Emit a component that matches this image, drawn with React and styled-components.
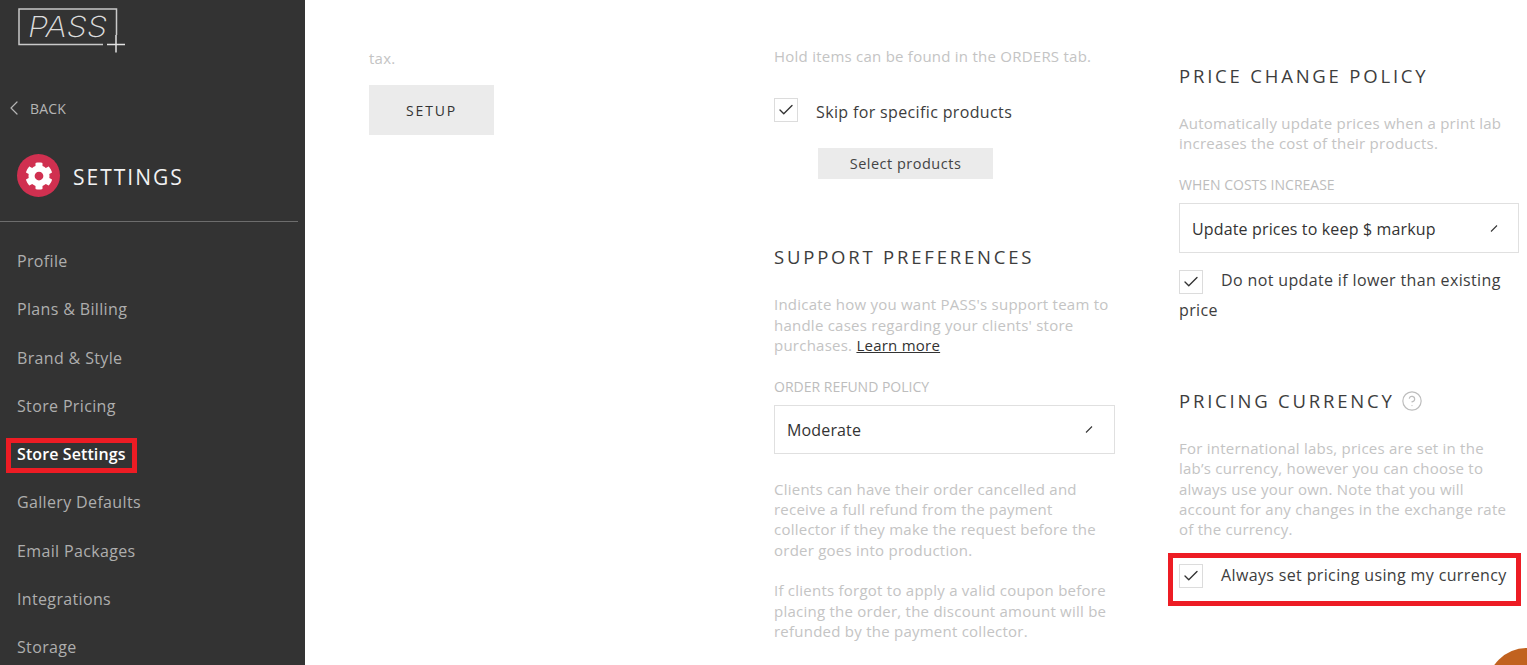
import styled, { createGlobalStyle } from "styled-components";
import { Check, ChevronLeft, CircleHelp } from "lucide-react";
import { FaCog } from "react-icons/fa";

const navItems = [
  "Profile",
  "Plans & Billing",
  "Brand & Style",
  "Store Pricing",
  "Store Settings",
  "Gallery Defaults",
  "Email Packages",
  "Integrations",
  "Storage",
];

function Logo() {
  return (
    <LogoMark width="112" height="46" viewBox="0 0 112 46">
      <path d="M98.5 27V1H1V36.5H85" fill="none" stroke="#c9c9c9" strokeWidth="1.5" />
      <text
        x="10"
        y="29"
        fontFamily="Inter, sans-serif"
        fontSize="29"
        fontStyle="italic"
        fontWeight="200"
        fill="#dcdcdc"
        textLength="79"
        lengthAdjust="spacingAndGlyphs"
      >
        PASS
      </text>
      <path d="M89 36.5H107M98 27V44.5" fill="none" stroke="#e2e2e2" strokeWidth="1.5" />
    </LogoMark>
  );
}

function Checkbox() {
  return (
    <Box>
      <Check size={18} strokeWidth={1.8} color="#333" />
    </Box>
  );
}

function Dropdown({ value, height, arrowGap }) {
  return (
    <Select $height={height} $arrowGap={arrowGap}>
      <span>{value}</span>
      <svg width="10" height="10" viewBox="0 0 10 10">
        <path d="M2 8.5L8 2.5" stroke="#333" strokeWidth="1.1" />
      </svg>
    </Select>
  );
}

export default function App() {
  return (
    <Page>
      <GlobalStyle />
      <Sidebar>
        <Logo />
        <Back>
          <ChevronLeft size={24} strokeWidth={1.2} color="#b5b5b5" />
          BACK
        </Back>
        <SettingsHead>
          <GearBadge>
            <FaCog size={28} color="#fff" />
          </GearBadge>
          <SettingsLabel>SETTINGS</SettingsLabel>
        </SettingsHead>
        <Divider />
        <Nav>
          {navItems.map((item) => (
            <NavItem key={item} $active={item === "Store Settings"}>
              {item}
            </NavItem>
          ))}
        </Nav>
      </Sidebar>

      <Main>
        <ColumnOne>
          <Help>tax.</Help>
          <SetupButton>SETUP</SetupButton>
        </ColumnOne>

        <ColumnTwo>
          <Help>Hold items can be found in the ORDERS tab.</Help>
          <CheckRow>
            <Checkbox />
            <CheckText>Skip for specific products</CheckText>
          </CheckRow>
          <SmallButton>Select products</SmallButton>
          <Heading $top={66}>SUPPORT PREFERENCES</Heading>
          <Help $top={25}>
            Indicate how you want PASS's support team to handle cases regarding your clients' store purchases.{" "}
            <LearnMore>Learn more</LearnMore>
          </Help>
          <Label $top={22}>ORDER REFUND POLICY</Label>
          <Dropdown value="Moderate" height={49} arrowGap={20} />
          <Help $top={25}>
            Clients can have their order cancelled and receive a full refund from the payment collector if they make the
            request before the order goes into production.
          </Help>
          <Help $top={20}>
            If clients forgot to apply a valid coupon before placing the order, the discount amount will be refunded by
            the payment collector.
          </Help>
        </ColumnTwo>

        <ColumnThree>
          <Heading>PRICE CHANGE POLICY</Heading>
          <Help $top={25}>Automatically update prices when a print lab increases the cost of their products.</Help>
          <Label $top={22}>WHEN COSTS INCREASE</Label>
          <Dropdown value="Update prices to keep $ markup" height={50} arrowGap={19} />
          <WrapRow>
            <Checkbox />
            <CheckText>Do not update if lower than existing price</CheckText>
          </WrapRow>
          <Heading $top={64}>
            PRICING CURRENCY
            <CircleHelp size={22} strokeWidth={1.3} color="#bdbdbd" />
          </Heading>
          <Help $top={25}>
            For international labs, prices are set in the lab’s currency, however you can choose to always use your own.
            Note that you will account for any changes in the exchange rate of the currency.
          </Help>
          <MarkedRow>
            <Checkbox />
            <CheckText>Always set pricing using my currency</CheckText>
          </MarkedRow>
        </ColumnThree>
      </Main>
      <ChatBubble />
    </Page>
  );
}

const GlobalStyle = createGlobalStyle`
  html, body {
    margin: 0;
    height: 100%;
    overflow: hidden;
    background: #fff;
  }
  body {
    font-family: "Open Sans", sans-serif;
    color: #333;
  }
`;

const Page = styled.div`
  position: relative;
  display: flex;
  width: 100vw;
  height: 100vh;
  overflow: hidden;
`;

const Sidebar = styled.aside`
  flex: 0 0 305px;
  display: flex;
  flex-direction: column;
  background: #333;
  padding-top: 8px;
  box-sizing: border-box;
  overflow: hidden;

  > * {
    flex-shrink: 0;
  }
`;

const LogoMark = styled.svg`
  display: block;
  margin-left: 18px;
`;

const Back = styled.div`
  display: flex;
  align-items: center;
  gap: 4px;
  margin: 44px 0 0 2px;
  height: 20px;
  font-size: 14px;
  letter-spacing: 0.2px;
  color: #b5b5b5;
`;

const SettingsHead = styled.div`
  display: flex;
  align-items: center;
  gap: 13px;
  margin: 36px 0 0 17px;
  font-size: 21px;
  letter-spacing: 2px;
  color: #f2f2f2;
`;

const SettingsLabel = styled.span`
  padding-top: 2px;
`;

const GearBadge = styled.span`
  display: flex;
  align-items: center;
  justify-content: center;
  width: 43px;
  height: 43px;
  border-radius: 50%;
  background: #d03050;
`;

const Divider = styled.div`
  width: 298px;
  height: 1px;
  margin-top: 24px;
  background: #6d6d6d;
`;

const Nav = styled.nav`
  display: flex;
  flex-direction: column;
  margin-top: 15px;
`;

const NavItem = styled.div`
  position: relative;
  flex: 0 0 48.25px;
  display: flex;
  align-items: center;
  padding-left: 17px;
  font-size: 16px;
  letter-spacing: ${(p) => (p.$active ? 0.1 : 0.35)}px;
  font-weight: ${(p) => (p.$active ? 600 : 400)};
  color: ${(p) => (p.$active ? "#fff" : "#aeaeae")};

  ${(p) =>
    p.$active &&
    `
    &::after {
      content: "";
      position: absolute;
      left: 6px;
      top: 8px;
      width: 131px;
      height: 35px;
      box-sizing: border-box;
      border: 5px solid #ed1c24;
    }
  `}
`;

const Main = styled.main`
  flex: 1;
  display: grid;
  grid-template-columns: 341px 341px 340px;
  column-gap: 64px;
  padding-left: 64px;
`;

const ColumnOne = styled.section`
  padding-top: 48px;
`;

const ColumnTwo = styled.section`
  padding-top: 46px;
`;

const ColumnThree = styled.section`
  padding-top: 64px;
`;

const Help = styled.p`
  margin: ${(p) => p.$top || 0}px 0 0;
  font-size: 15px;
  line-height: 20.4px;
  letter-spacing: 0.24px;
  color: #c4c4c4;
`;

const LearnMore = styled.a`
  color: #333;
  text-decoration: underline;
`;

const Heading = styled.h2`
  display: flex;
  align-items: center;
  gap: 6px;
  margin: ${(p) => p.$top || 0}px 0 0;
  font-size: 18.5px;
  line-height: 24px;
  font-weight: 400;
  letter-spacing: 2.8px;
  color: #3d3d3d;
`;

const Label = styled.div`
  margin-top: ${(p) => p.$top || 0}px;
  font-size: 14px;
  line-height: 18px;
  color: #bdbdbd;
`;

const SetupButton = styled.button`
  display: block;
  width: 125px;
  height: 50px;
  margin-top: 17px;
  border: 0;
  background: #ebebeb;
  font: 14px "Open Sans", sans-serif;
  letter-spacing: 1.8px;
  color: #333;
`;

const SmallButton = styled.button`
  display: block;
  width: 175px;
  height: 31px;
  margin: 22px 0 0 44px;
  border: 0;
  background: #ebebeb;
  font: 14.5px "Open Sans", sans-serif;
  letter-spacing: 0.5px;
  color: #444;
`;

const Select = styled.div`
  display: flex;
  align-items: center;
  justify-content: space-between;
  height: ${(p) => p.$height}px;
  margin-top: 9px;
  padding: 0 ${(p) => p.$arrowGap}px 0 12px;
  border: 1px solid #e0e0e0;
  box-sizing: border-box;
  font-size: 16px;
  letter-spacing: 0.15px;
  color: #333;

  span {
    padding-top: 2px;
  }
`;

const Box = styled.span`
  display: inline-flex;
  align-items: center;
  justify-content: center;
  width: 24px;
  height: 24px;
  border: 1px solid #dcdcdc;
  box-sizing: border-box;
  vertical-align: middle;
`;

const CheckRow = styled.div`
  display: flex;
  align-items: flex-start;
  gap: 18px;
  margin-top: 32px;
  line-height: 28px;
`;

const CheckText = styled.span`
  font-size: 16px;
  letter-spacing: 0.36px;
  color: #3d3d3d;
`;

const WrapRow = styled.div`
  margin-top: 12px;
  line-height: 30px;

  ${CheckText} {
    margin-left: 18px;
  }
`;

const MarkedRow = styled.div`
  position: relative;
  margin-top: 24px;
  display: flex;
  align-items: center;
  gap: 18px;
  white-space: nowrap;

  ${CheckText} {
    margin-top: -2px;
  }

  &::after {
    content: "";
    position: absolute;
    left: -11px;
    top: -11px;
    width: 353px;
    height: 53px;
    box-sizing: border-box;
    border: 5px solid #ed1c24;
  }
`;

const ChatBubble = styled.div`
  position: absolute;
  left: 1487px;
  top: 648px;
  width: 80px;
  height: 80px;
  border-radius: 50%;
  background: #c1621f;
`;
